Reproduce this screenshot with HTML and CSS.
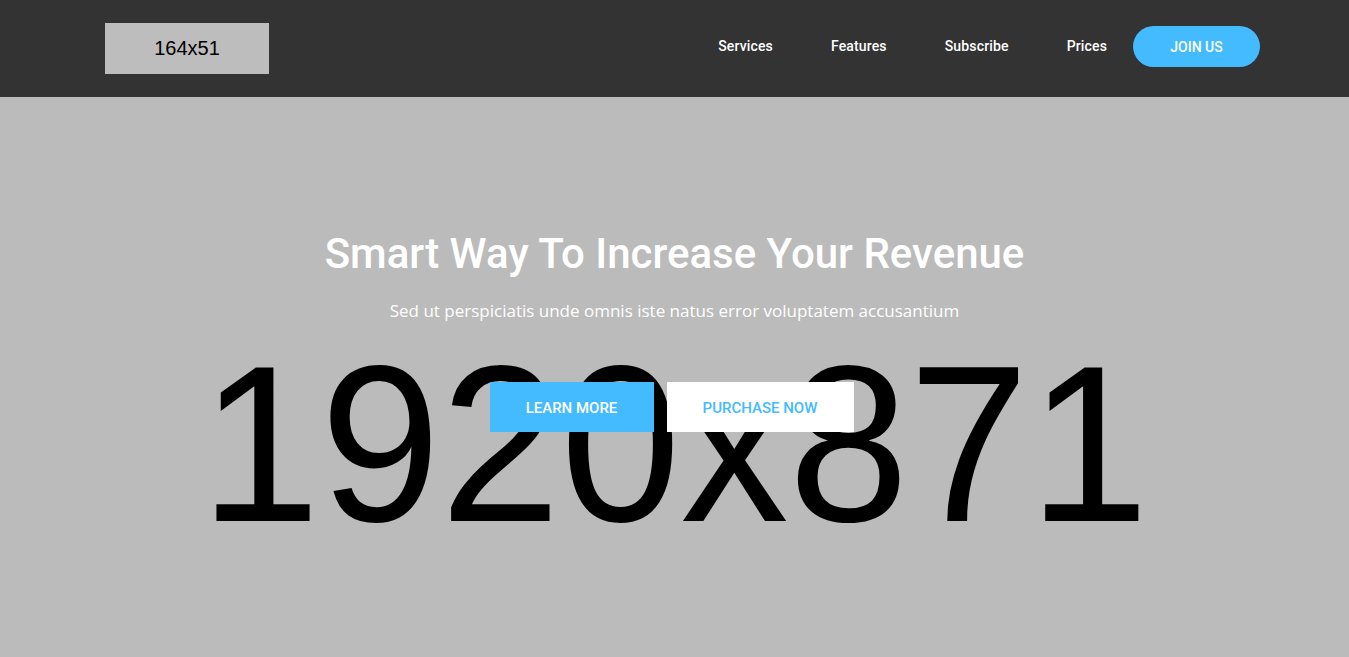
FILE: index.html
```html
<!DOCTYPE html>
<html lang="en">
<head>
<meta charset="utf-8">
<title>Smart Way</title>
<link rel="stylesheet" href="styles.css">
</head>
<body>
<header class="topbar">
  <div class="logo">164x51</div>
  <nav class="nav">
    <a class="nav-link" href="#">Services</a>
    <a class="nav-link" href="#">Features</a>
    <a class="nav-link" href="#">Subscribe</a>
    <a class="nav-link nav-link-last" href="#">Prices</a>
    <a class="join" href="#">JOIN US</a>
  </nav>
</header>
<section class="hero">
  <div class="hero-bg">1920x871</div>
  <div class="hero-content">
    <h1 class="title">Smart Way To Increase Your Revenue</h1>
    <p class="subtitle">Sed ut perspiciatis unde omnis iste natus error voluptatem accusantium</p>
    <div class="actions">
      <a class="btn btn-primary" href="#">LEARN MORE</a>
      <a class="btn btn-light" href="#">PURCHASE NOW</a>
    </div>
  </div>
</section>
</body>
</html>
```
FILE: styles.css
```css
* { box-sizing: border-box; }
html, body { margin: 0; padding: 0; }
body {
  background: #bbbbbb;
  font-family: Roboto, "Liberation Sans", sans-serif;
  overflow: hidden;
  height: 657px;
}
a { text-decoration: none; }

.topbar {
  height: 97px;
  background: #333333;
  display: flex;
  align-items: flex-start;
  justify-content: space-between;
  padding: 0 89px 0 105px;
}
.logo {
  width: 164px;
  height: 51px;
  margin-top: 23px;
  background: #bdbdbd;
  color: #000;
  font-family: "Liberation Sans", Arial, sans-serif;
  font-size: 20px;
  display: flex;
  align-items: center;
  justify-content: center;
}
.nav {
  display: flex;
  align-items: center;
  margin-top: 26px;
}
.nav-link {
  color: #fff;
  font-size: 14px;
  font-weight: 500;
  letter-spacing: 0.15px;
  margin-right: 58px;
  margin-bottom: 2px;
}
.nav-link-last { margin-right: 26px; }
.join {
  width: 127px;
  height: 41px;
  border-radius: 21px;
  background: #44baff;
  color: #fff;
  font-size: 14px;
  font-weight: 500;
  display: flex;
  align-items: center;
  justify-content: center;
}

.hero {
  position: relative;
  height: 560px;
  overflow: hidden;
}
.hero-bg {
  position: absolute;
  left: 0;
  right: 0;
  top: 241px;
  text-align: center;
  font-family: "Liberation Sans", Arial, sans-serif;
  font-size: 216px;
  line-height: 1;
  color: #000;
  transform: scaleY(1.03);
  transform-origin: 50% 183px;
}
.hero-content {
  position: relative;
  padding-top: 132px;
  text-align: center;
  color: #fff;
}
.title {
  margin: 0;
  font-size: 42px;
  line-height: 1.2;
  font-weight: 500;
}
.subtitle {
  margin: 19px 0 0;
  font-family: "Open Sans", sans-serif;
  font-size: 17px;
  line-height: 1.5;
}
.actions {
  margin-top: 58px;
  padding-right: 6px;
  display: flex;
  justify-content: center;
  gap: 13px;
}
.btn {
  height: 50px;
  padding-top: 2px;
  display: flex;
  align-items: center;
  justify-content: center;
  font-size: 15px;
  font-weight: 500;
}
.btn-primary {
  width: 164px;
  background: #44baff;
  color: #fff;
}
.btn-light {
  width: 187px;
  background: #fff;
  color: #44baff;
}
```
